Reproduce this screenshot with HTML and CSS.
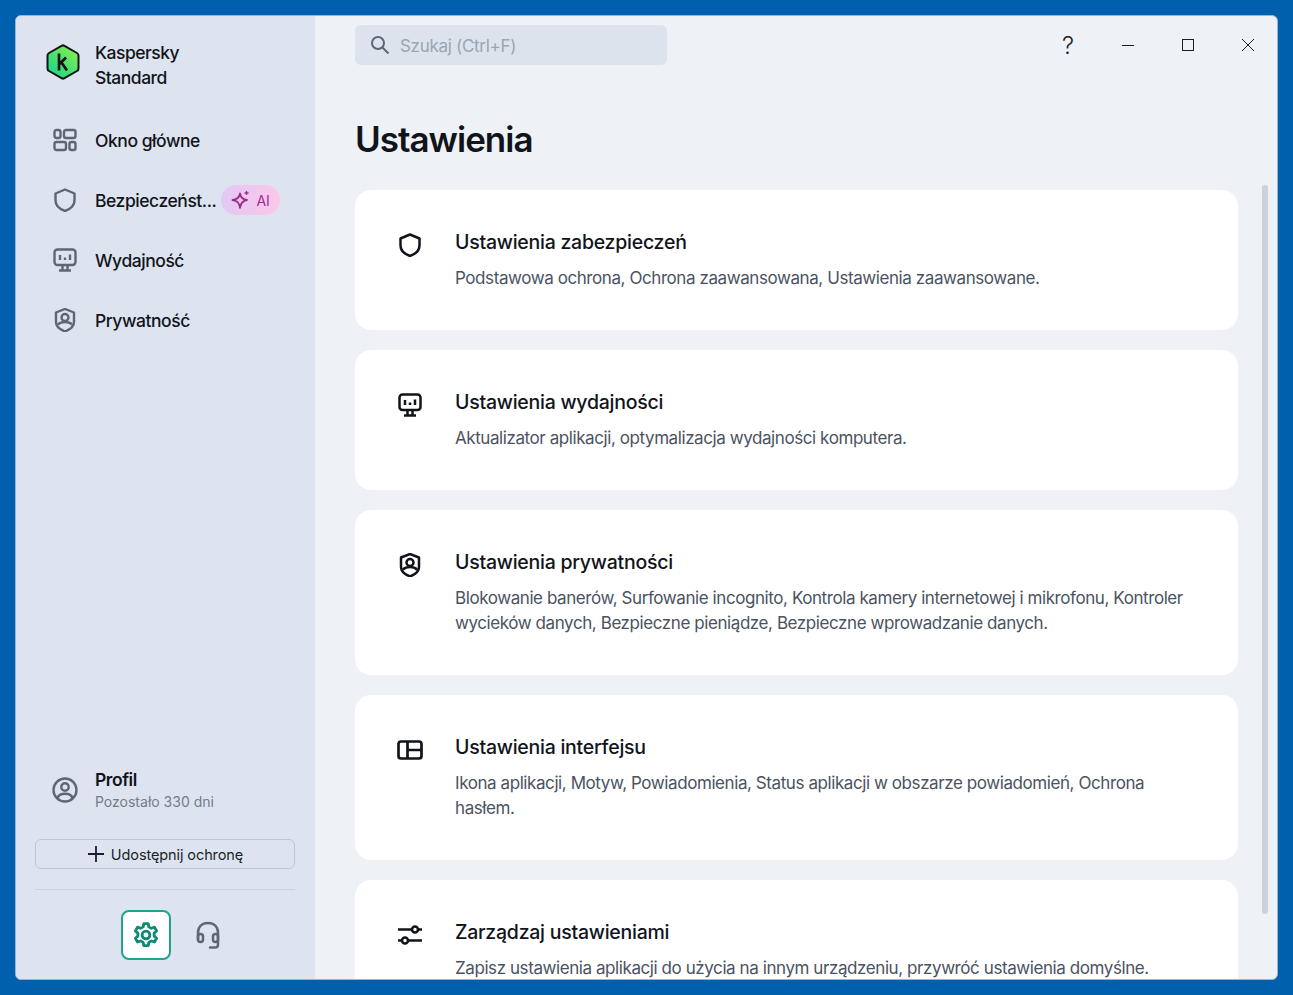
FILE: index.html
```html
<!DOCTYPE html>
<html lang="pl">
<head>
  <meta charset="UTF-8">
  <title>Kaspersky Standard - Ustawienia</title>
  <link rel="stylesheet" href="styles.css">
</head>
<body>
  <div class="window">
    <aside class="sidebar">
      <div class="brand">
        <svg class="logo" width="34" height="36" viewBox="0 0 34 36">
          <defs>
            <linearGradient id="hex" x1="0.1" y1="1" x2="0.9" y2="0">
              <stop offset="0" stop-color="#14d48c"/>
              <stop offset="1" stop-color="#8cf04c"/>
            </linearGradient>
          </defs>
          <path d="M15.500 1.800a3 3 0 0 1 3 0l12.500 7.200a3 3 0 0 1 1.500 2.600v12.800a3 3 0 0 1-1.500 2.600l-12.500 7.200a3 3 0 0 1-3 0L3 27a3 3 0 0 1-1.500-2.600V11.600A3 3 0 0 1 3 9z" fill="url(#hex)" stroke="#11141a" stroke-width="2"/>
          <path d="M13 9.500v17M13 20.500l7-7M15.500 18.500l5.500 8" fill="none" stroke="#11141a" stroke-width="2.700"/>
        </svg>
        <div class="brand-name">Kaspersky<br>Standard</div>
      </div>

      <nav class="nav">
        <a class="nav-item">
          <svg class="nav-icon" width="24" height="24" viewBox="0 0 24 24" fill="none" stroke="#5e6672" stroke-width="2.400">
            <rect x="1.500" y="2" width="6" height="8" rx="2"/>
            <rect x="11" y="2" width="11.500" height="8" rx="2"/>
            <rect x="1.500" y="14" width="11.500" height="8" rx="2"/>
            <rect x="16.500" y="14" width="6" height="8" rx="2"/>
          </svg>
          <span>Okno główne</span>
        </a>
        <a class="nav-item">
          <svg class="nav-icon" width="24" height="24" viewBox="0 0 24 24" fill="none" stroke="#5e6672" stroke-width="2.400" stroke-linejoin="round">
            <path d="M12 1.500 21.500 5.500v7c0 5-4 8.500-9.500 10.500C6.500 21 2.500 17.500 2.500 12.500v-7z"/>
          </svg>
          <span class="nav-cut">Bezpieczeńst...</span>
          <span class="ai-badge">
            <svg width="20" height="20" viewBox="0 0 20 20" fill="none" stroke="#9a2f86" stroke-width="1.800" stroke-linejoin="round">
              <path d="M9 3.500c.6 3.600 2.400 5.900 7 6.500-4.600.6-6.400 2.900-7 8-.6-5.100-2.400-7.400-7.500-8C6.600 9.400 8.400 7.100 9 3.500z"/>
              <path d="M15.500 1v4M13.500 3h4" stroke-width="1.300"/>
            </svg>
            AI
          </span>
        </a>
        <a class="nav-item">
          <svg class="nav-icon" width="24" height="24" viewBox="0 0 24 24" fill="none" stroke="#5e6672" stroke-width="2.400" stroke-linejoin="round">
            <rect x="1.500" y="1.500" width="21" height="15.500" rx="3"/>
            <path d="M7 7v5M12 9.500V12M17 6.500V12M9.500 17v5M14.500 17v5M6 22.500h12"/>
          </svg>
          <span>Wydajność</span>
        </a>
        <a class="nav-item">
          <svg class="nav-icon" width="24" height="24" viewBox="0 0 24 24" fill="none" stroke="#5e6672" stroke-width="2.400" stroke-linejoin="round">
            <path d="M12 1 21 4.500v9.500c0 4-4 7.500-9 9.500-5-2-9-5.500-9-9.500V4.500z"/>
            <circle cx="12" cy="9.500" r="3.500"/>
            <path d="M5 16.500c2-2 4-2.500 7-2.500s5 .5 7 2.500"/>
          </svg>
          <span>Prywatność</span>
        </a>
      </nav>

      <div class="sidebar-foot">
        <div class="profile">
          <svg class="nav-icon" width="26" height="26" viewBox="0 0 26 26" fill="none" stroke="#5e6672" stroke-width="2.400">
            <circle cx="13" cy="13" r="11.500"/>
            <circle cx="13" cy="10" r="3.700"/>
            <path d="M5.500 21c1-3 4-4.200 7.500-4.200s6.500 1.200 7.500 4.200"/>
          </svg>
          <div>
            <div class="profile-name">Profil</div>
            <div class="profile-days">Pozostało 330 dni</div>
          </div>
        </div>
        <button class="share-btn">
          <svg width="18" height="18" viewBox="0 0 18 18" stroke="#1b1f27" stroke-width="1.800"><path d="M9 1v16M1 9h16"/></svg>
          Udostępnij ochronę
        </button>
        <div class="foot-line"></div>
        <div class="foot-icons">
          <div class="gear-btn">
            <svg width="26" height="26" viewBox="0 0 24 24" fill="none" stroke="#0f8a72" stroke-width="2.600" stroke-linejoin="round">
              <path d="M10 1.500h4l.6 3 2.300 1.300 2.900-1 2 3.500-2.300 2 .0 2.700 2.300 2-2 3.500-2.900-1-2.300 1.300-.6 3h-4l-.6-3-2.300-1.300-2.900 1-2-3.500 2.300-2V10.300l-2.300-2 2-3.500 2.900 1 2.300-1.300z"/>
              <circle cx="12" cy="12" r="3.600"/>
            </svg>
          </div>
          <svg width="24" height="28" viewBox="0 0 24 28" fill="none" stroke="#5e6672" stroke-width="2.500" stroke-linecap="round">
            <path d="M2 18V12C2 5.500 6 2 12 2s10 3.500 10 10v6"/>
            <rect x="2" y="13" width="5" height="8" rx="2.500"/>
            <rect x="17" y="13" width="5" height="8" rx="2.500"/>
            <path d="M22 19v5c0 1.500-1 2.500-3 2.500h-5"/>
          </svg>
        </div>
      </div>
    </aside>

    <main class="main">
      <header class="topbar">
        <div class="search">
          <svg width="20" height="20" viewBox="0 0 20 20" fill="none" stroke="#5e6672" stroke-width="2"><circle cx="8" cy="8" r="6"/><path d="m12.500 12.500 6 6"/></svg>
          <span class="search-text">Szukaj (Ctrl+F)</span>
        </div>
        <div class="win-controls">
          <div class="win-btn win-help">?</div>
          <div class="win-btn"><svg width="12" height="12" viewBox="0 0 12 12" stroke="#1b1f27"><path d="M0 6.500h12"/></svg></div>
          <div class="win-btn"><svg width="12" height="12" viewBox="0 0 12 12" fill="none" stroke="#1b1f27"><rect x=".5" y=".5" width="11" height="11"/></svg></div>
          <div class="win-btn"><svg width="12" height="12" viewBox="0 0 12 12" stroke="#1b1f27"><path d="m0 0 12 12M12 0 0 12"/></svg></div>
        </div>
      </header>

      <h1>Ustawienia</h1>

      <section class="cards">
        <div class="card">
          <svg class="card-icon" width="26" height="24" viewBox="-1 0 26 24" fill="none" stroke="#11141a" stroke-width="2.500" stroke-linejoin="round">
            <path d="M12 1.500 21.500 5.500v7c0 5-4 8.500-9.500 10.500C6.500 21 2.500 17.500 2.500 12.500v-7z"/>
          </svg>
          <div>
            <h2>Ustawienia zabezpieczeń</h2>
            <p>Podstawowa ochrona, Ochrona zaawansowana, Ustawienia zaawansowane.</p>
          </div>
        </div>
        <div class="card">
          <svg class="card-icon" width="26" height="24" viewBox="-1 0 26 24" fill="none" stroke="#11141a" stroke-width="2.500" stroke-linejoin="round">
            <rect x="1.500" y="1.500" width="21" height="15.500" rx="3"/>
            <path d="M7 7v5M12 9.500V12M17 6.500V12M9.500 17v5M14.500 17v5M6 22.500h12"/>
          </svg>
          <div>
            <h2>Ustawienia wydajności</h2>
            <p>Aktualizator aplikacji, optymalizacja wydajności komputera.</p>
          </div>
        </div>
        <div class="card card-tall">
          <svg class="card-icon" width="26" height="24" viewBox="-1 0 26 24" fill="none" stroke="#11141a" stroke-width="2.500" stroke-linejoin="round">
            <path d="M12 1 21 4.500v9.500c0 4-4 7.500-9 9.500-5-2-9-5.500-9-9.500V4.500z"/>
            <circle cx="12" cy="9.500" r="3.500"/>
            <path d="M5 16.500c2-2 4-2.500 7-2.500s5 .5 7 2.500"/>
          </svg>
          <div>
            <h2>Ustawienia prywatności</h2>
            <p>Blokowanie banerów, Surfowanie incognito, Kontrola kamery internetowej i mikrofonu, Kontroler wycieków danych, Bezpieczne pieniądze, Bezpieczne wprowadzanie danych.</p>
          </div>
        </div>
        <div class="card card-tall">
          <svg class="card-icon" width="26" height="24" viewBox="0 0 26 24" fill="none" stroke="#11141a" stroke-width="2.700" stroke-linejoin="round">
            <rect x="1.500" y="3.500" width="23" height="17" rx="2.500"/>
            <path d="M10.500 3.500v17M10.500 12h14"/>
          </svg>
          <div>
            <h2>Ustawienia interfejsu</h2>
            <p>Ikona aplikacji, Motyw, Powiadomienia, Status aplikacji w obszarze powiadomień, Ochrona hasłem.</p>
          </div>
        </div>
        <div class="card card-tall">
          <svg class="card-icon" width="26" height="24" viewBox="0 0 26 24" fill="none" stroke="#11141a" stroke-width="2.500">
            <path d="M1 6.500h14M21 6.500h4M1 17.500h4M11 17.500h14"/>
            <circle cx="18" cy="6.500" r="3"/>
            <circle cx="8" cy="17.500" r="3"/>
          </svg>
          <div>
            <h2>Zarządzaj ustawieniami</h2>
            <p>Zapisz ustawienia aplikacji do użycia na innym urządzeniu, przywróć ustawienia domyślne.</p>
          </div>
        </div>
      </section>
      <div class="scroll-thumb"></div>
    </main>
  </div>
</body>
</html>
```

FILE: styles.css
```css
* {
  box-sizing: border-box;
}

html, body {
  height: 100%;
}

body {
  margin: 0;
  padding: 15px;
  background: #0060ae;
  font-family: "Inter", "Liberation Sans", sans-serif;
  color: #11141a;
  overflow: hidden;
}

.window {
  display: flex;
  width: 1263px;
  height: 965px;
  border: 1px solid #9fb4cc;
  border-radius: 6px;
  overflow: hidden;
  background: #eef1f6;
}

/* sidebar */
.sidebar {
  display: flex;
  flex-direction: column;
  width: 299px;
  flex-shrink: 0;
  background: #dee4ef;
  padding: 0 20px 19px 19px;
}

.brand {
  display: flex;
  align-items: flex-start;
  gap: 15px;
  padding: 24px 0 0 11px;
  height: 94px;
}

.logo {
  margin-top: 4px;
}

.brand-name {
  font-size: 17.5px;
  font-weight: 500;
  line-height: 25px;
  letter-spacing: -0.5px;
}

.nav {
  display: flex;
  flex-direction: column;
}

.nav-item {
  display: flex;
  align-items: center;
  height: 60px;
  padding-left: 18px;
  font-size: 17.5px;
  font-weight: 500;
  letter-spacing: -0.45px;
}

.nav-icon {
  flex-shrink: 0;
  margin-right: 18px;
}

.ai-badge {
  display: flex;
  align-items: center;
  gap: 5px;
  width: 59px;
  height: 30px;
  margin-left: 5px;
  padding-left: 10px;
  border-radius: 15px;
  background: linear-gradient(90deg, #e2c9f5, #fcc6ea);
  color: #9a2f86;
  font-size: 14px;
  font-weight: 400;
  letter-spacing: 0;
}

.sidebar-foot {
  margin-top: auto;
}

.profile {
  display: flex;
  align-items: center;
  padding-left: 17px;
  margin-bottom: 27px;
}

.profile .nav-icon {
  margin-right: 17px;
}

.profile-name {
  font-size: 17.5px;
  font-weight: 600;
  line-height: 24px;
  letter-spacing: -0.45px;
}

.profile-days {
  font-size: 14px;
  line-height: 20px;
  color: #737b88;
  letter-spacing: 0;
}

.share-btn {
  display: flex;
  align-items: center;
  justify-content: center;
  gap: 6px;
  width: 100%;
  height: 30px;
  background: transparent;
  border: 1px solid #bfc6d6;
  border-radius: 6px;
  font-family: inherit;
  font-size: 14.5px;
  color: #1b1f27;
  letter-spacing: -0.1px;
}

.foot-line {
  height: 1px;
  margin: 20px 0;
  background: #cdd3df;
}

.foot-icons {
  display: flex;
  align-items: center;
  padding-left: 86px;
  gap: 25px;
}

.gear-btn {
  display: flex;
  align-items: center;
  justify-content: center;
  width: 50px;
  height: 50px;
  background: #fff;
  border: 2px solid #1fa58c;
  border-radius: 8px;
}

/* main */
.main {
  position: relative;
  flex: 1;
  min-width: 0;
  padding: 9px 0 0 40px;
  overflow: hidden;
}

.topbar {
  display: flex;
  justify-content: space-between;
  align-items: flex-start;
}

.search {
  display: flex;
  align-items: center;
  gap: 10px;
  width: 312px;
  height: 40px;
  padding-left: 15px;
  background: #dce3ed;
  border-radius: 6px;
  color: #9ba5b3;
  font-size: 17px;
  letter-spacing: -0.3px;
}

.search-text {
  padding-top: 2px;
}

.win-controls {
  display: flex;
  margin-right: -1px;
}

.win-btn {
  display: flex;
  align-items: center;
  justify-content: center;
  width: 60px;
  height: 40px;
}

.win-help {
  font-size: 24px;
  font-weight: 300;
  color: #1b1f27;
}

h1 {
  margin: 52px 0 29px;
  font-size: 35px;
  line-height: 44px;
  font-weight: 600;
  letter-spacing: -1px;
}

.cards {
  display: flex;
  flex-direction: column;
  gap: 20px;
  width: 883px;
}

.card {
  display: flex;
  flex-shrink: 0;
  gap: 32px;
  height: 140px;
  padding: 39px 38px 0 42px;
  background: #fff;
  border-radius: 16px;
}

.card-tall {
  height: 165px;
}

.card-icon {
  flex-shrink: 0;
  margin-top: 4px;
}

.card h2 {
  margin: 0 0 11px;
  font-size: 19.5px;
  line-height: 26px;
  font-weight: 500;
  letter-spacing: -0.25px;
}

.card p {
  margin: 0;
  font-size: 17px;
  line-height: 25px;
  color: #4a5361;
  letter-spacing: -0.42px;
}

.scroll-thumb {
  position: absolute;
  top: 169px;
  right: 9px;
  width: 6px;
  height: 729px;
  border-radius: 3px;
  background: #ccd2dc;
}
```
